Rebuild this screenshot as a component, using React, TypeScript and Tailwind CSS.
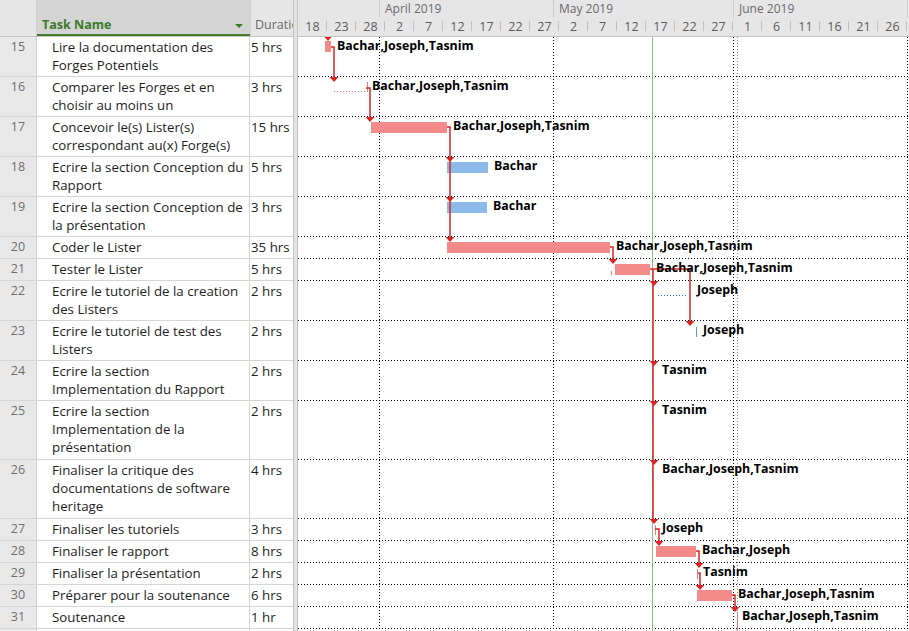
import React from "react";

type Row = { n: number; lines: string[]; d: string; h: number };

const rows: Row[] = [
  { n: 15, lines: ["Lire la documentation des", "Forges Potentiels"], d: "5 hrs", h: 40 },
  { n: 16, lines: ["Comparer les Forges et en", "choisir au moins un"], d: "3 hrs", h: 40 },
  { n: 17, lines: ["Concevoir le(s) Lister(s)", "correspondant au(x) Forge(s)"], d: "15 hrs", h: 40 },
  { n: 18, lines: ["Ecrire la section Conception du", "Rapport"], d: "5 hrs", h: 40 },
  { n: 19, lines: ["Ecrire la section Conception de", "la présentation"], d: "3 hrs", h: 40 },
  { n: 20, lines: ["Coder le Lister"], d: "35 hrs", h: 22 },
  { n: 21, lines: ["Tester le Lister"], d: "5 hrs", h: 22 },
  { n: 22, lines: ["Ecrire le tutoriel de la creation", "des Listers"], d: "2 hrs", h: 40 },
  { n: 23, lines: ["Ecrire le tutoriel de test des", "Listers"], d: "2 hrs", h: 40 },
  { n: 24, lines: ["Ecrire la section", "Implementation du Rapport"], d: "2 hrs", h: 40 },
  { n: 25, lines: ["Ecrire la section", "Implementation de la", "présentation"], d: "2 hrs", h: 59 },
  { n: 26, lines: ["Finaliser la critique des", "documentations de software", "heritage"], d: "4 hrs", h: 59 },
  { n: 27, lines: ["Finaliser les tutoriels"], d: "3 hrs", h: 22 },
  { n: 28, lines: ["Finaliser le rapport"], d: "8 hrs", h: 22 },
  { n: 29, lines: ["Finaliser la présentation"], d: "2 hrs", h: 22 },
  { n: 30, lines: ["Préparer pour la soutenance"], d: "6 hrs", h: 22 },
  { n: 31, lines: ["Soutenance"], d: "1 hr", h: 22 },
];

const months = [
  { label: "", w: 81 },
  { label: "April 2019", w: 174 },
  { label: "May 2019", w: 180 },
  { label: "June 2019", w: 174 },
  { label: "", w: 10 },
];

const days = ["18", "23", "28", "2", "7", "12", "17", "22", "27", "2", "7", "12", "17", "22", "27", "1", "6", "11", "16", "21", "26"];

// row boundaries in page coordinates
const bounds: number[] = [37];
rows.forEach(r => bounds.push(bounds[bounds.length - 1] + r.h));

const PINK = "#f48b8b";
const BLUE = "#8cb9e9";
const RED = "#dc2424";

const bars = [
  { x: 325, y: 41, w: 6, c: PINK },
  { x: 371, y: 122, w: 76, c: PINK },
  { x: 447, y: 162, w: 41, c: BLUE },
  { x: 447, y: 202, w: 40, c: BLUE },
  { x: 447, y: 242, w: 163, c: PINK },
  { x: 615, y: 264, w: 35, c: PINK },
  { x: 656, y: 546, w: 40, c: PINK },
  { x: 697, y: 590, w: 35, c: PINK },
];

const labels = [
  { x: 337, y: 46, t: "Bachar,Joseph,Tasnim" },
  { x: 372, y: 86, t: "Bachar,Joseph,Tasnim" },
  { x: 453, y: 126, t: "Bachar,Joseph,Tasnim" },
  { x: 494, y: 166, t: "Bachar" },
  { x: 493, y: 206, t: "Bachar" },
  { x: 616, y: 246, t: "Bachar,Joseph,Tasnim" },
  { x: 656, y: 268, t: "Bachar,Joseph,Tasnim" },
  { x: 697, y: 290, t: "Joseph" },
  { x: 703, y: 330, t: "Joseph" },
  { x: 662, y: 370, t: "Tasnim" },
  { x: 662, y: 410, t: "Tasnim" },
  { x: 662, y: 469, t: "Bachar,Joseph,Tasnim" },
  { x: 662, y: 528, t: "Joseph" },
  { x: 702, y: 550, t: "Bachar,Joseph" },
  { x: 703, y: 572, t: "Tasnim" },
  { x: 738, y: 594, t: "Bachar,Joseph,Tasnim" },
  { x: 742, y: 616, t: "Bachar,Joseph,Tasnim" },
];

const links = [
  "M331,47 H334 V80",
  "M366,88 H370 V120",
  "M447,127 H450 V240",
  "M610,247 H613 V262",
  "M650,269 H690 V324",
  "M653,269 V522",
  "M655,529 H659 V544",
  "M696,551 H699 V566",
  "M698,573 H700 V588",
  "M732,595 H735 V610",
];

// arrow tips (x, tip y)
const heads: [number, number][] = [
  [328, 41], [334, 82], [370, 122], [450, 162], [450, 202], [450, 242], [613, 264],
  [654, 286], [690, 326], [654, 366], [654, 406], [654, 465], [654, 524],
  [659, 546], [699, 568], [700, 590], [735, 612],
];

function Gantt() {
  return (
    <svg width={611} height={594} className="block">
      <g transform="translate(-298,-37)">
        {bounds.slice(1).map(y => (
          <line key={y} x1={298} x2={909} y1={y - 0.5} y2={y - 0.5} stroke="#000" strokeDasharray="1 2" />
        ))}
        {[379, 553, 733, 907].map(x => (
          <line key={x} x1={x + 0.5} x2={x + 0.5} y1={37} y2={631} stroke="#000" strokeDasharray="1 2" />
        ))}
        <line x1={737.5} x2={737.5} y1={37} y2={631} stroke="#8a8a8a" strokeDasharray="1 2" />
        <line x1={652.5} x2={652.5} y1={37} y2={631} stroke="#8fbf86" />

        {bars.map((b, i) => (
          <rect key={i} x={b.x} y={b.y} width={b.w} height={11} fill={b.c} />
        ))}

        <line x1={334} x2={366} y1={91.5} y2={91.5} stroke="#f25f5f" strokeDasharray="1 2" />
        <line x1={367.5} x2={367.5} y1={82} y2={92} stroke="#f07a7a" />
        <line x1={611.5} x2={611.5} y1={271} y2={275} stroke="#f07a7a" />
        <line x1={658} x2={688} y1={295.5} y2={295.5} stroke="#1f7ce0" strokeDasharray="1 2" />
        <line x1={696.5} x2={696.5} y1={327} y2={337} stroke="#5b9bd5" />
        {[367, 407, 466].map(y => (
          <line key={y} x1={652.5} x2={652.5} y1={y + 5} y2={y + 15} stroke="#5b9bd5" />
        ))}
        <line x1={655.5} x2={655.5} y1={525} y2={535} stroke="#f07a7a" />
        <line x1={697.5} x2={697.5} y1={569} y2={579} stroke="#f07a7a" />
        <line x1={737.5} x2={737.5} y1={612} y2={631} stroke="#f07a7a" />

        {links.map((d, i) => (
          <path key={i} d={d} fill="none" stroke={RED} strokeWidth={1.5} />
        ))}
        {heads.map(([x, y], i) => (
          <polygon key={i} points={`${x - 4.5},${y - 5} ${x + 4.5},${y - 5} ${x},${y}`} fill={RED} />
        ))}

        {labels.map((l, i) => (
          <text key={i} x={l.x} y={l.y + 4} fontSize={12.4} fontWeight={700} fill="#000" style={{ fontFamily: "'Open Sans', sans-serif" }}>
            {l.t}
          </text>
        ))}
      </g>
    </svg>
  );
}

export default function App() {
  return (
    <div className="w-[909px] h-[631px] overflow-hidden bg-white flex font-['Open_Sans',sans-serif] text-[12px]">
      {/* task table */}
      <div className="w-[293px] shrink-0 flex flex-col">
        <div className="h-[37px] flex border-b border-[#c6c6c6] bg-[#e6e6e6]">
          <div className="w-[37px] border-r border-[#d0d0d0]" />
          <div className="w-[213px] bg-[#d4d4d4] border-b-2 border-[#3f7f2c] flex items-start pt-[16px] pl-[5px] pr-[7px]">
            <span className="text-[#3b7a27] font-bold text-[12.5px] leading-[18px]">Task Name</span>
            <svg width="8" height="5" className="ml-auto mt-[8px]"><polygon points="0,0 8,0 4,4" fill="#3b7a27" /></svg>
          </div>
          <div className="flex-1 flex items-start pt-[16px] pl-[4px] overflow-hidden border-l border-[#d0d0d0]">
            <span className="text-[#6a6a6a] text-[12.5px] leading-[18px] whitespace-nowrap">Duration</span>
          </div>
        </div>
        {rows.map(r => (
          <div key={r.n} className="flex border-b border-[#d6d6d6] text-[13.3px]" style={{ height: r.h }}>
            <div className="w-[37px] shrink-0 bg-[#e8e8e8] border-r border-[#cfcfcf] text-center text-[#6e6e6e] text-[12.5px] pt-px leading-[18px]">{r.n}</div>
            <div className="w-[213px] shrink-0 pl-[15px] pt-px text-[#1e1e1e] leading-[18px] border-r border-[#d6d6d6]">
              {r.lines.map((l, i) => (
                <div key={i} className="whitespace-nowrap">{l}</div>
              ))}
            </div>
            <div className="flex-1 pl-[1px] pt-px text-[#1e1e1e] leading-[18px] whitespace-nowrap overflow-hidden">{r.d}</div>
          </div>
        ))}
        <div className="flex flex-1">
          <div className="w-[37px] bg-[#e8e8e8] border-r border-[#cfcfcf]" />
          <div className="w-[213px] border-r border-[#d6d6d6]" />
        </div>
      </div>

      {/* splitter */}
      <div className="w-[5px] shrink-0 bg-[#e3e3e3] border-l border-r border-[#c4c4c4]" />

      {/* timeline */}
      <div className="flex-1 flex flex-col min-w-0">
        <div className="h-[37px] bg-[#e6e6e6] border-b border-[#c6c6c6] flex flex-col">
          <div className="h-[17px] flex">
            {months.map((m, i) => (
              <div key={i} className={`shrink-0 h-full text-[#6a6a6a] leading-[17px] pl-[5px] whitespace-nowrap ${i > 0 ? "border-l border-[#cdcdcd]" : ""}`} style={{ width: m.w }}>
                {m.label}
              </div>
            ))}
          </div>
          <div className="flex-1 flex items-center">
            {days.map((d, i) => (
              <div key={i} className="w-[29px] shrink-0 relative text-center text-[#5c5c5c] text-[12.5px] leading-[18px]">
                {d}
                <span className="absolute right-0 top-[3px] h-[10px] w-px bg-[#c2c2c2]" />
              </div>
            ))}
          </div>
        </div>
        <Gantt />
      </div>
    </div>
  );
}
